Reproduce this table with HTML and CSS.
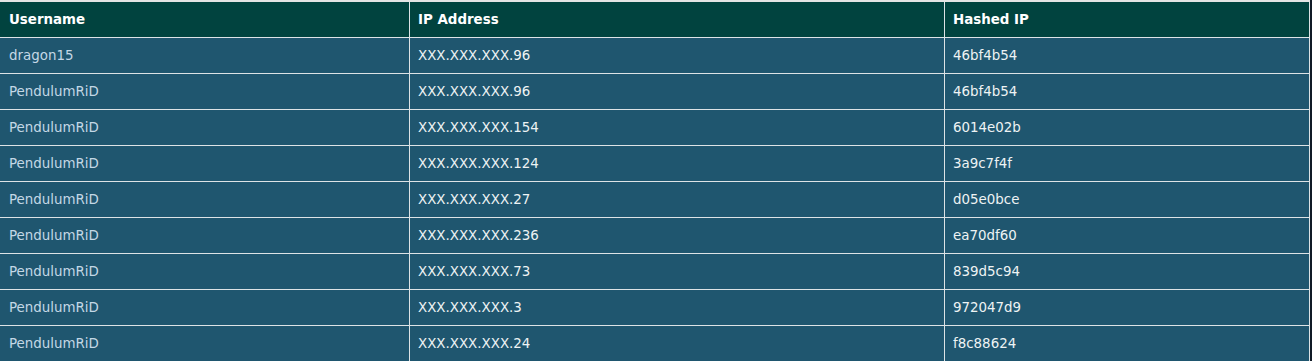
FILE: index.html
```html
<!DOCTYPE html>
<html>
<head>
<meta charset="utf-8">
<link rel="stylesheet" href="styles.css">
</head>
<body>
<table class="ip-table">
  <colgroup>
    <col class="c-user">
    <col class="c-ip">
    <col class="c-hash">
  </colgroup>
  <thead>
    <tr><th class="first">Username</th><th>IP Address</th><th>Hashed IP</th></tr>
  </thead>
  <tbody>
    <tr><td class="user first">dragon15</td><td>XXX.XXX.XXX.96</td><td>46bf4b54</td></tr>
    <tr><td class="user first">PendulumRiD</td><td>XXX.XXX.XXX.96</td><td>46bf4b54</td></tr>
    <tr><td class="user first">PendulumRiD</td><td>XXX.XXX.XXX.154</td><td>6014e02b</td></tr>
    <tr><td class="user first">PendulumRiD</td><td>XXX.XXX.XXX.124</td><td>3a9c7f4f</td></tr>
    <tr><td class="user first">PendulumRiD</td><td>XXX.XXX.XXX.27</td><td>d05e0bce</td></tr>
    <tr><td class="user first">PendulumRiD</td><td>XXX.XXX.XXX.236</td><td>ea70df60</td></tr>
    <tr><td class="user first">PendulumRiD</td><td>XXX.XXX.XXX.73</td><td>839d5c94</td></tr>
    <tr><td class="user first">PendulumRiD</td><td>XXX.XXX.XXX.3</td><td>972047d9</td></tr>
    <tr><td class="user first">PendulumRiD</td><td>XXX.XXX.XXX.24</td><td>f8c88624</td></tr>
  </tbody>
</table>
</body>
</html>
```
FILE: styles.css
```css
html, body {
  margin: 0;
  padding: 0;
  background: #101a26;
  overflow: hidden;
}
.ip-table {
  border-collapse: collapse;
  table-layout: fixed;
  width: 1310px;
  margin-left: -1px;
  font-family: "DejaVu Sans", Verdana, sans-serif;
  font-size: 13.4px;
  border-top: 2px solid #e4e4e4;
}
.c-user { width: 410px; }
.c-ip { width: 535px; }
.c-hash { width: 365px; }
.ip-table th,
.ip-table td {
  border: 1px solid #dde3e6;
  padding: 0 8px;
  height: 35px;
  line-height: 15px;
  text-align: left;
  vertical-align: middle;
  white-space: nowrap;
}
.ip-table .first {
  padding-left: 9px;
}
.ip-table thead th {
  border-top: none;
  height: 35px;
  background: #01433f;
  color: #ffffff;
  font-weight: bold;
}
.ip-table td {
  background: #1f566f;
  color: #eef3f4;
}
.ip-table td.user {
  color: #c4d8e6;
}
```
